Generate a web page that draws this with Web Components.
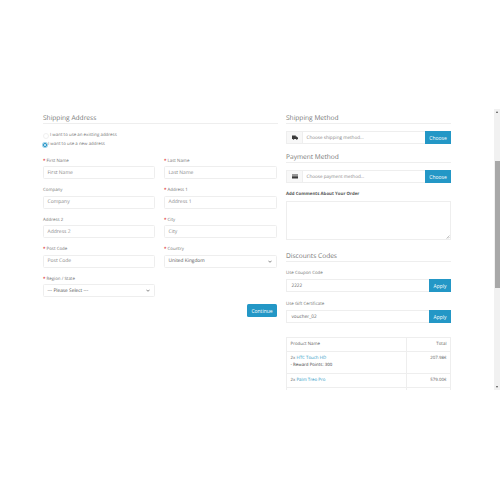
<!DOCTYPE html>
<html>
<head>
<meta charset="utf-8">
<title>Checkout</title>
<style>
    html, body { margin: 0; padding: 0; background: #fff; overflow: hidden; }
    body { font-family: "Open Sans", "Liberation Sans", sans-serif; font-size: 4.4px; color: #777; text-rendering: geometricPrecision; }
</style>
</head>
<body>
<checkout-page>
    <div slot="left">
        <section-title>Shipping Address</section-title>
        <address-choice></address-choice>
        <form-grid>
            <form-field label="First Name" required placeholder="First Name"></form-field>
            <form-field label="Last Name" required placeholder="Last Name"></form-field>
            <form-field label="Company" placeholder="Company"></form-field>
            <form-field label="Address 1" required placeholder="Address 1"></form-field>
            <form-field label="Address 2" placeholder="Address 2"></form-field>
            <form-field label="City" required placeholder="City"></form-field>
            <form-field label="Post Code" required placeholder="Post Code"></form-field>
            <form-field label="Country" required select="United Kingdom"></form-field>
            <form-field label="Region / State" required select="--- Please Select ---"></form-field>
        </form-grid>
        <continue-row>Continue</continue-row>
    </div>
    <div slot="right">
        <section-title>Shipping Method</section-title>
        <input-group icon="truck" placeholder="Choose shipping method..." action="Choose"></input-group>
        <section-title class="next">Payment Method</section-title>
        <input-group icon="card" placeholder="Choose payment method..." action="Choose"></input-group>
        <comment-box>Add Comments About Your Order</comment-box>
        <section-title class="discount">Discounts Codes</section-title>
        <code-field label="Use Coupon Code" value="2222"></code-field>
        <code-field label="Use Gift Certificate" value="voucher_02"></code-field>
        <order-table></order-table>
    </div>
</checkout-page>

<template id="checkout-page-template">
    <style>
        :host { display: block; height: 500px; padding-top: 109px; box-sizing: border-box; background: #fff; }
        .frame { position: relative; height: 281px; overflow: hidden; }
        .columns { display: grid; grid-template-columns: 235px 165px; column-gap: 8px; padding: 3px 0 0 43px; }
        .bar { position: absolute; top: 0; right: 0; bottom: 0; width: 6px; background: #f1f1f1; }
        .thumb { position: absolute; top: 52px; left: 1px; width: 5px; height: 127px; background: #a8a8a8; }
        .arrow { position: absolute; left: 2px; width: 0; height: 0; border-left: 1.5px solid transparent; border-right: 1.5px solid transparent; }
        .up { top: 2px; border-bottom: 2px solid #505050; }
        .down { bottom: 2px; border-top: 2px solid #505050; }
    </style>
    <div class="frame">
        <div class="columns">
            <slot name="left"></slot>
            <slot name="right"></slot>
        </div>
        <div class="bar">
            <div class="arrow up"></div>
            <div class="thumb"></div>
            <div class="arrow down"></div>
        </div>
    </div>
</template>

<template id="section-title-template">
    <style>
        :host { display: block; font-size: 6.6px; line-height: 11px; color: #777; border-bottom: 1px solid #eee; }
        :host(.next) { margin-top: 7px; }
        :host(.discount) { margin-top: 10.5px; }
    </style>
    <slot></slot>
</template>

<template id="address-choice-template">
    <style>
        :host { display: block; padding-top: 7px; margin-bottom: 7.5px; line-height: 9px; color: #777; }
        .row { display: flex; align-items: center; gap: 1.5px; }
        .dot { width: 4px; height: 4px; margin-left: -0.5px; border-radius: 50%; border: .5px solid #f0f0f0; background: #fff; box-sizing: content-box; }
        .on { border: 1.5px solid #1d8fc4; width: 2px; height: 2px; box-shadow: 0 0 0 1px #9fd3ea; }
    </style>
    <div class="row"><span class="dot"></span><span>I want to use an existing address</span></div>
    <div class="row"><span class="dot on"></span><span>I want to use a new address</span></div>
</template>

<template id="form-grid-template">
    <style>
        :host { display: grid; grid-template-columns: 112px 113px; column-gap: 9px; row-gap: 7px; }
    </style>
    <slot></slot>
</template>

<template id="form-field-template">
    <style>
        :host { display: block; }
        label { display: block; line-height: 8px; margin-bottom: 1.5px; color: #777; }
        .req { color: #d9252a; font-weight: 700; }
        .box { height: 13px; box-sizing: border-box; border: 1px solid #eee; border-radius: 1.5px; padding: 0 3.5px; display: flex; align-items: center; justify-content: space-between; font-size: 5px; color: #888; background: #fff; }
        .box.sel { color: #555; font-size: 4.8px; }
        svg { width: 4px; height: 3px; margin-right: 1px; }
    </style>
    <label></label>
    <div class="box"></div>
</template>

<template id="continue-row-template">
    <style>
        :host { display: flex; justify-content: flex-end; width: 234px; margin-top: 7px; }
        button { font: inherit; font-size: 5px; height: 13px; width: 30px; padding: 0; color: #fff; background: #2397c6; border: 0; border-radius: 1.5px; }
    </style>
    <button><slot></slot></button>
</template>

<template id="input-group-template">
    <style>
        :host { display: flex; height: 13px; margin-top: 7px; box-sizing: border-box; font-size: 4.6px; color: #888; }
        .icon { width: 16px; display: flex; align-items: center; justify-content: center; background: #f8f8f8; border: 1px solid #eee; border-right: 0; box-sizing: border-box; }
        svg { width: 6px; height: 5px; fill: #3a3a3a; }
        .text { flex: 1; display: flex; align-items: center; padding-left: 3.5px; border: 1px solid #eee; border-right: 0; }
        button { font: inherit; font-size: 5px; width: 26px; padding: 0; color: #fff; background: #2397c6; border: 0; }
    </style>
    <div class="icon"></div>
    <div class="text"></div>
    <button></button>
</template>

<template id="comment-box-template">
    <style>
        :host { display: block; margin-top: 8px; }
        label { display: block; font-weight: 700; line-height: 7px; color: #555; margin-bottom: 2.5px; }
        .area { position: relative; height: 39px; box-sizing: border-box; border: 1px solid #eee; background: #fff; }
        svg { position: absolute; right: 0; bottom: 0; width: 4px; height: 4px; }
    </style>
    <label><slot></slot></label>
    <div class="area">
        <svg viewBox="0 0 8 8"><path d="M7 1 1 7M7 4 4 7" stroke="#888" fill="none"/></svg>
    </div>
</template>

<template id="code-field-template">
    <style>
        :host { display: block; margin-top: 7px; padding-bottom: 1px; }
        label { display: block; line-height: 8px; color: #777; margin-bottom: 2px; }
        .group { display: flex; height: 13px; font-size: 4.7px; color: #666; }
        .text { flex: 1; display: flex; align-items: center; padding-left: 4.5px; border: 1px solid #eee; border-right: 0; }
        button { font: inherit; font-size: 5px; width: 22px; padding: 0; color: #fff; background: #2397c6; border: 0; }
    </style>
    <label></label>
    <div class="group">
        <div class="text"></div>
        <button>Apply</button>
    </div>
</template>

<template id="order-table-template">
    <style>
        :host { display: block; margin-top: 13px; color: #666; }
        table { width: 100%; border-collapse: collapse; table-layout: fixed; }
        td { border: 1px solid #eee; padding: 3px 3.5px; line-height: 7px; text-align: left; vertical-align: top; }
        .num { width: 44px; box-sizing: border-box; text-align: right; }
        .head td { height: 13px; box-sizing: border-box; vertical-align: middle; }
        a { color: #2f9ac6; text-decoration: none; }
        small { display: block; font-size: 4.4px; color: #444; margin-bottom: 1px; }
    </style>
    <table>
        <tr class="head"><td>Product Name</td><td class="num">Total</td></tr>
        <tr><td>2x <a>HTC Touch HD</a><small>- Reward Points: 300</small></td><td class="num">207.98€</td></tr>
        <tr><td>2x <a>Palm Treo Pro</a></td><td class="num">579.00€</td></tr>
        <tr><td>1x <a>Canon EOS 5D</a></td><td class="num">122.00€</td></tr>
    </table>
</template>

<script>
    const cloneInto = function(el, id) {
        const shadow = el.attachShadow({mode: 'open'});
        shadow.appendChild(document.getElementById(id).content.cloneNode(true));
        return shadow;
    };

    const chevron = '<svg viewBox="0 0 10 6"><path d="M1 1l4 4 4-4" fill="none" stroke="#444" stroke-width="1.6"/></svg>';
    const icons = {
        truck: '<svg viewBox="0 0 12 10"><path d="M0 1h7.500v2h2l2.500 2.500V8h-1a1.500 1.500 0 0 1-3 0H4.500a1.500 1.500 0 0 1-3 0H0z"/></svg>',
        card: '<svg viewBox="0 0 12 10"><path d="M0 1h12v2.200H0zM0 4.600h12V9H0z"/></svg>'
    };

    class SimpleBlock extends HTMLElement {
        connectedCallback() {
            cloneInto(this, this.localName + '-template');
        }
    }

    class FormField extends HTMLElement {
        connectedCallback() {
            const shadow = cloneInto(this, 'form-field-template');
            const label = shadow.querySelector('label');
            if (this.hasAttribute('required')) {
                const star = document.createElement('span');
                star.className = 'req';
                star.textContent = '* ';
                label.appendChild(star);
            }
            label.appendChild(document.createTextNode(this.getAttribute('label')));
            const box = shadow.querySelector('.box');
            if (this.hasAttribute('select')) {
                box.classList.add('sel');
                box.innerHTML = '<span>' + this.getAttribute('select') + '</span>' + chevron;
            } else {
                box.textContent = this.getAttribute('placeholder');
            }
        }
    }

    class InputGroup extends HTMLElement {
        connectedCallback() {
            const shadow = cloneInto(this, 'input-group-template');
            shadow.querySelector('.icon').innerHTML = icons[this.getAttribute('icon')];
            shadow.querySelector('.text').textContent = this.getAttribute('placeholder');
            shadow.querySelector('button').textContent = this.getAttribute('action');
        }
    }

    class CodeField extends HTMLElement {
        connectedCallback() {
            const shadow = cloneInto(this, 'code-field-template');
            shadow.querySelector('label').textContent = this.getAttribute('label');
            shadow.querySelector('.text').textContent = this.getAttribute('value');
        }
    }

    ['checkout-page', 'section-title', 'address-choice', 'form-grid', 'continue-row', 'comment-box', 'order-table'].forEach(function(name) {
        customElements.define(name, class extends SimpleBlock {});
    });
    customElements.define('form-field', FormField);
    customElements.define('input-group', InputGroup);
    customElements.define('code-field', CodeField);
</script>
</body>
</html>
